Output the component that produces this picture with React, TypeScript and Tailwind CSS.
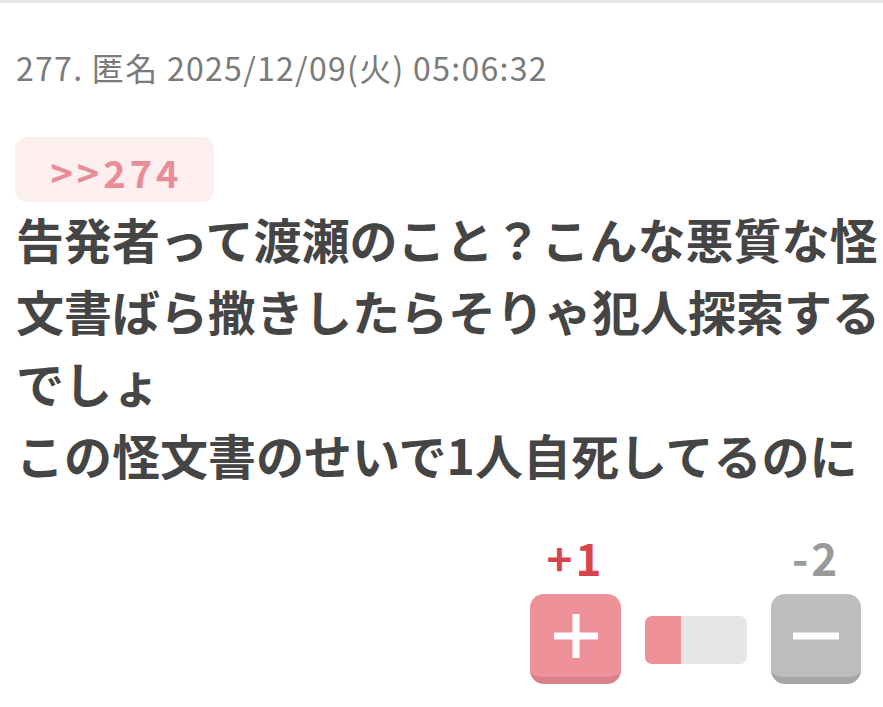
const FONT = "font-['Noto_Sans_CJK_JP','Noto_Sans',sans-serif]"

const PlusIcon = () => (
    <svg width="44" height="44" viewBox="0 0 44 44">
        <rect x="0" y="18.5" width="44" height="7" fill="#fff" />
        <rect x="18.5" y="0" width="7" height="44" fill="#fff" />
    </svg>
)

const MinusIcon = () => (
    <svg width="46" height="8" viewBox="0 0 46 8">
        <rect x="0" y="0.5" width="46" height="7" fill="#fff" />
    </svg>
)

const VoteBar = ({ plus, minus }: { plus: number; minus: number }) => {
    const ratio = plus / (plus + Math.abs(minus))
    return (
        <div className="w-[102px] h-[48px] mb-[20px] rounded-[7px] bg-[#e6e6e6] overflow-hidden flex">
            <div className="h-full bg-[#ef9199]" style={{ width: `${Math.round(ratio * 102) + 2}px` }} />
        </div>
    )
}

const App = () => {
    const plus = 1
    const minus = -2

    return (
        <div className={`w-[883px] h-[707px] bg-white overflow-hidden ${FONT}`}>
            <div className="h-[3px] bg-[#e6e6e6]" />

            {/* Post header */}
            <div className="pl-[16px] pt-[43px] text-[32px] leading-[42px] tracking-[1.3px] text-[#7a7a7a]">
                277. 匿名 2025/12/09(火) 05:06:32
            </div>

            {/* Reply anchor */}
            <div className="pl-[15px] mt-[49px]">
                <div className="w-[199px] h-[65px] rounded-[12px] bg-[#fdeef0] flex items-center justify-center">
                    <span className="text-[38px] font-bold tracking-[4px] text-[#e88c97] pt-[4px] pl-[4px]">&gt;&gt;274</span>
                </div>
            </div>

            {/* Body */}
            <div className="pl-[16px] text-[48px] leading-[72px] font-bold text-[#454545]">
                告発者って渡瀬のこと？こんな悪質な怪文書ばら撒きしたらそりゃ犯人探索するでしょ
                <br />
                この怪文書のせいで1人自死してるのに
            </div>

            {/* Votes */}
            <div className="flex justify-end items-end gap-[24px] pr-[22px] mt-[45px]">
                <div className="flex flex-col items-center">
                    <span className="text-[44px] leading-[44px] font-bold tracking-[3px] text-[#d9434c] mb-[15px]">+{plus}</span>
                    <button className="w-[91px] h-[90px] rounded-[14px] bg-[#ef9199] border-b-[7px] border-[#d9818a] flex items-center justify-center">
                        <PlusIcon />
                    </button>
                </div>
                <VoteBar plus={plus} minus={minus} />
                <div className="flex flex-col items-center">
                    <span className="text-[44px] leading-[44px] font-bold tracking-[3px] text-[#9a9a9a] mb-[15px]">{minus}</span>
                    <button className="w-[90px] h-[90px] rounded-[14px] bg-[#bdbdbd] border-b-[7px] border-[#a6a6a6] flex items-center justify-center">
                        <MinusIcon />
                    </button>
                </div>
            </div>
        </div>
    )
}

export default App
